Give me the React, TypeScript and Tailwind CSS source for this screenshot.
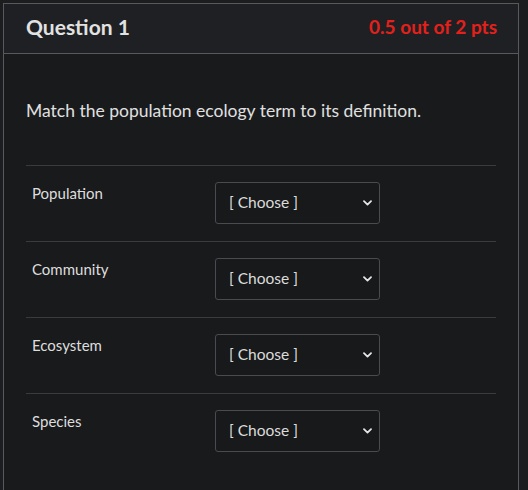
import React from "react";

const terms = ["Population", "Community", "Ecosystem", "Species"];

function ChooseSelect() {
  return (
    <div className="relative w-[165px]">
      <select
        defaultValue=""
        className="appearance-none w-full h-[42px] rounded-[3px] border border-[#4a4b4e] bg-[#18191b] pl-[13px] pr-8 text-[15.5px] text-[#dcdcdc] outline-none"
      >
        <option value="">[ Choose ]</option>
      </select>
      <svg
        className="pointer-events-none absolute right-[8px] top-1/2 -translate-y-1/2"
        width="9"
        height="6"
        viewBox="0 0 9 6"
        fill="none"
      >
        <path d="M1 1.2 L4.5 4.6 L8 1.2" stroke="#e6e6e6" strokeWidth="1.8" strokeLinecap="round" strokeLinejoin="round" />
      </svg>
    </div>
  );
}

export default function App() {
  return (
    <div
      className="min-h-[490px] bg-[#1c1d1f] pl-[3px] pt-[3px] pr-[9px]"
      style={{ fontFamily: "Lato, 'Open Sans', sans-serif" }}
    >
      <div className="min-h-[487px] border border-[#58595c] border-b-0 bg-[#191a1c]">
        <div className="flex h-[50px] items-center justify-between border-b border-[#58595c] bg-[#1f2023] pl-[22px] pr-[21px] pb-[3px]">
          <h2 className="text-[21px] font-bold text-[#e2e2e2]">Question 1</h2>
          <span className="text-[19px] font-bold text-[#e3201b]">0.5 out of 2 pts</span>
        </div>
        <div className="px-[22px]">
          <p className="pt-[44px] pb-[41px] text-[17.5px] leading-[26px] text-[#e0e0e0]">
            Match the population ecology term to its definition.
          </p>
          {terms.map((t) => (
            <div key={t} className="flex items-start border-t border-[#3a3b3e] pt-[16px] pb-[17px]">
              <div className="w-[189px] pl-[6px] text-[15px] text-[#dedede]">{t}</div>
              <ChooseSelect />
            </div>
          ))}
        </div>
      </div>
    </div>
  );
}
